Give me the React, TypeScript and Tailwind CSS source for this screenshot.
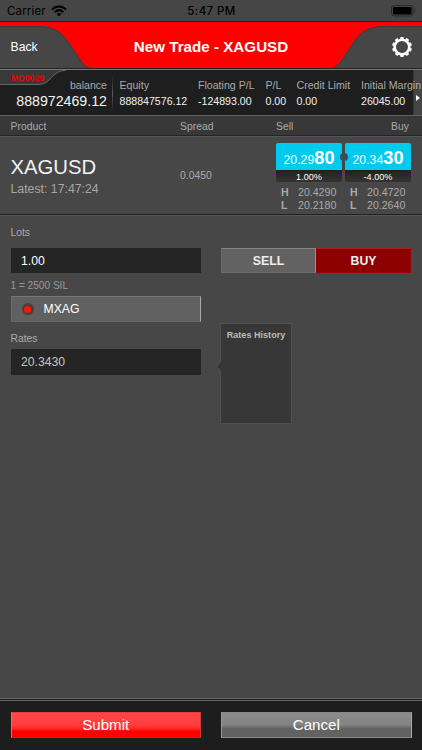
import { ReactNode } from 'react';

const accountFields = [
  { label: 'Equity', value: '888847576.12', width: 'w-[78.5px]' },
  { label: 'Floating P/L', value: '-124893.00', width: 'w-[67.5px]' },
  { label: 'P/L', value: '0.00', width: 'w-[31px]' },
  { label: 'Credit Limit', value: '0.00', width: 'w-[64.5px]' },
  { label: 'Initial Margin', value: '26045.00', width: 'w-[70px]' },
];

const quotes = [
  { side: 'Sell', base: '20.29', pips: '80', change: '1.00%', high: '20.4290', low: '20.2180' },
  { side: 'Buy', base: '20.34', pips: '30', change: '-4.00%', high: '20.4720', low: '20.2640' },
];

function StatusBar() {
  return (
    <div className="flex h-[21px] shrink-0 items-center bg-[#464646] pt-[2px] font-['Inter',sans-serif] text-black">
      <div className="flex flex-1 items-center gap-[5px] pl-[7px] text-[11.5px] tracking-[0.15px]">
        <span>Carrier</span>
        <svg width="16" height="12" viewBox="0 0 16 12" fill="none" stroke="black" strokeWidth="2" className="mb-px">
          <path d="M1 4.5C5 .4 11 .4 15 4.5" />
          <path d="M3.7 7.2c2.6-2.5 6-2.5 8.6 0" />
          <path d="M8 11.5 5.6 9c1.4-1.2 3.4-1.2 4.8 0Z" fill="black" stroke="none" />
        </svg>
      </div>
      <span className="text-[11.5px] font-medium tracking-[0.4px]">5:47 PM</span>
      <div className="flex flex-1 justify-end pb-px pr-[6px]">
        <svg width="25" height="12" viewBox="0 0 25 12">
          <rect x=".5" y=".5" width="21.5" height="10.5" rx="2.5" fill="none" stroke="#292929" />
          <rect x="2" y="2" width="18.5" height="7.5" rx="1.2" />
          <path d="M23.3 4v4c1.3-.7 1.3-3.3 0-4Z" fill="#292929" />
        </svg>
      </div>
    </div>
  );
}

function Gear() {
  const teeth = [0, 36, 72, 108, 144, 180, 216, 252, 288, 324];
  return (
    <svg width="20" height="20" viewBox="-10 -10 20 20">
      <circle r="7.3" fill="none" stroke="white" strokeWidth="2.6" />
      {teeth.map((angle) => (
        <path key={angle} d="M-1.9-8-1.5-9.9H1.5L1.9-8Z" fill="white" transform={`rotate(${angle})`} />
      ))}
    </svg>
  );
}

function NavBar() {
  return (
    <header className="relative h-[48px] shrink-0">
      <svg className="absolute inset-0" width="422" height="48" viewBox="0 0 422 48">
        <rect width="422" height="48" fill="#464646" />
        <path
          d="M0 .5H422V5H384C366 5 359 13 352 23L342 38C338 44 335 47 329 47H93C87 47 84 44 80 38L70 23C63 13 56 5 38 5H0Z"
          fill="#ff0000"
        />
        <path
          d="M0 5.5H38C56 5.5 63 13.5 69.5 23.5L79.5 38.5C83 44 86 46.5 89 46.5M422 5.5H384C366 5.5 359 13.5 352.5 23.5L342.5 38.5C339 44 336 46.5 333 46.5"
          fill="none"
          stroke="#353535"
          strokeOpacity=".65"
        />
        <path d="M0 .5H422" stroke="#2b2020" />
        <path d="M0 47.5H422" stroke="#252525" />
      </svg>
      <div className="relative flex h-[52px] items-center px-[10.5px] text-white">
        <span className="w-[60px] text-[12.2px]">Back</span>
        <h1 className="flex-1 text-center text-[15.2px] font-bold">New Trade - XAGUSD</h1>
        <span className="flex w-[60px] justify-end">
          <Gear />
        </span>
      </div>
    </header>
  );
}

function AccountBar() {
  return (
    <section className="relative flex h-[46px] shrink-0 overflow-hidden border-t border-[#777] bg-[#1e1e1e]">
      <svg className="absolute left-0 top-0" width="70" height="16" viewBox="0 0 70 16">
        <path d="M0 0H66C52 0 51 14.5 39 14.5H0Z" fill="#393939" />
        <path d="M66 .2C52 .2 51 14.5 39 14.5H0" fill="none" stroke="#666" />
      </svg>
      <span className="absolute left-[11px] top-[3px] text-[8.8px] leading-[10px] font-bold text-[#ee0000]">MD0029</span>
      <div className="absolute right-0 top-0 flex h-full w-[9px] items-center justify-center border-l border-[#8d1212] bg-[#454545] pt-[11px]">
        <svg width="4" height="6" viewBox="0 0 4 6" className="mb-[1px]">
          <path d="M0 0 4 3 0 6Z" fill="white" />
        </svg>
      </div>
      <div className="flex w-[112px] shrink-0 flex-col items-end pr-[5px] pt-[8px]">
        <span className="text-[10.6px] leading-[14px] text-[#aaa]">balance</span>
        <span className="text-[14.2px] leading-[18px] text-[#f4f4f4]">888972469.12</span>
      </div>
      <div className="mt-[7px] h-[33px] w-px shrink-0 bg-linear-to-b from-[#222] via-[#5a5a5a] to-[#222]" />
      <div className="relative flex shrink-0 pl-[6.5px] pt-[8px]">
        {accountFields.map((field) => (
          <div key={field.label} className={`${field.width} shrink-0 whitespace-nowrap`}>
            <div className="text-[10.6px] leading-[14px] text-[#aaa]">{field.label}</div>
            <div className="text-[10.6px] leading-[18px] text-[#f0f0f0]">{field.value}</div>
          </div>
        ))}
      </div>
    </section>
  );
}

function Quote({ quote }: { quote: (typeof quotes)[number] }) {
  return (
    <div className="w-[66px]">
      <div className="flex h-[27px] items-baseline justify-center rounded-t-[2px] bg-[#00caee] text-white">
        <span className="text-[12.3px] leading-[30px]">{quote.base}</span>
        <span className="text-[18.2px] leading-[30px] font-bold">{quote.pips}</span>
      </div>
      <div className="h-[12px] rounded-b-[2px] bg-linear-to-b from-[#232020] to-[#363333] text-center text-[9.1px] leading-[14px] text-white">
        {quote.change}
      </div>
      <div className="mt-[4px] grid grid-cols-[17px_1fr] pl-[5px] text-[10.6px] leading-[13px] text-[#aaa]">
        <b>H</b>
        <span>{quote.high}</span>
        <b>L</b>
        <span>{quote.low}</span>
      </div>
    </div>
  );
}

function ProductRow() {
  return (
    <section className="flex h-[79px] shrink-0 border-y border-t-[#565656] border-b-[#222]">
      <div className="w-[180px] pl-[10.5px] pt-[18px]">
        <div className="text-[20.3px] leading-[24px] text-[#f2f2f2]">XAGUSD</div>
        <div className="mt-[2px] text-[12.3px] leading-[16px] text-[#a6a6a6]">Latest: 17:47:24</div>
      </div>
      <div className="w-[96px] pt-[32px] text-[10.4px] leading-[14px] text-[#aaa]">0.0450</div>
      <div className="relative flex gap-[3px] pt-[6px]">
        {quotes.map((quote) => (
          <Quote key={quote.side} quote={quote} />
        ))}
        <span className="absolute left-[63.5px] top-[16px] size-[8px] rounded-full bg-[#424b50]" />
      </div>
    </section>
  );
}

function Label({ children }: { children: ReactNode }) {
  return <div className="text-[10.3px] leading-[12px] text-[#aaa]">{children}</div>;
}

function OrderForm() {
  return (
    <main className="flex flex-1 border-t border-[#555] px-[10.5px] pt-[11px]">
      <div className="w-[190.5px]">
        <Label>Lots</Label>
        <div className="mt-[9px] h-[25px] bg-[#252525] pl-[10.5px] text-[12.2px] leading-[26px] text-white">1.00</div>
        <div className="mt-[7px] text-[10.1px] leading-[12px] text-[#999]">1 = 2500 SIL</div>
        <div className="mt-[4px] flex h-[26px] items-center border border-t-[#777] border-r-[#aaa] border-b-[#686868] border-l-[#6d6d6d] bg-[#606060] pl-[10px] text-[12.2px] text-white">
          <span className="flex size-[12px] items-center justify-center rounded-full bg-[#4b3d39]">
            <span className="size-[7px] rounded-full bg-[#ff1400]" />
          </span>
          <span className="ml-[10px]">MXAG</span>
        </div>
        <div className="mt-[11px]">
          <Label>Rates</Label>
        </div>
        <div className="mt-[4px] h-[26px] bg-[#252525] pl-[10.5px] text-[12.2px] leading-[27px] text-[#c4c4c4]">20.3430</div>
      </div>
      <div className="ml-[20px] w-[190px] pt-[21px]">
        <div className="flex h-[25px] text-center text-[12.3px] font-bold text-[#eee]">
          <div className="flex-1 border border-t-[#858585] border-r-[#c08080] border-b-[#6d6d6d] border-l-[#6a6a6a] bg-[#626262] leading-[24px]">
            SELL
          </div>
          <div className="flex-1 border border-t-[#a52020] border-r-[#a00000] border-b-[#a00000] border-l-[#8c0000] bg-[#8c0000] leading-[24px]">
            BUY
          </div>
        </div>
        <div className="relative mt-[50px] -ml-px h-[101px] w-[72px] border border-[#505050] bg-[#373737] pt-[5px] text-center text-[9.1px] leading-[12px] font-bold text-[#bbb]">
          Rates History
          <svg className="absolute -left-[5px] top-[37px]" width="5" height="11" viewBox="0 0 5 11">
            <path d="M5 0 .7 5.5 5 11Z" fill="#373737" />
            <path d="M5 0 .7 5.5 5 11" fill="none" stroke="#505050" />
          </svg>
        </div>
      </div>
    </main>
  );
}

export default function App() {
  return (
    <div className="flex h-[750px] w-[422px] flex-col overflow-hidden bg-[#474747] font-['Liberation_Sans',Arial,sans-serif]">
      <StatusBar />
      <NavBar />
      <AccountBar />
      <div className="flex h-[21px] shrink-0 border-y border-t-[#626262] border-b-[#242424] bg-[#383838] pl-[10.5px] text-[10.4px] leading-[22px] text-[#aaa]">
        <span className="w-[169.5px]">Product</span>
        <span className="w-[96px]">Spread</span>
        <span>Sell</span>
        <span className="ml-auto pr-[13px]">Buy</span>
      </div>
      <ProductRow />
      <OrderForm />
      <footer className="flex h-[52px] shrink-0 gap-[20px] border-t-[3px] border-double border-[#666] bg-[#1d1d1d] px-[10.5px] pt-[11px] text-center text-[15.1px] leading-[24px] text-white">
        <div className="h-[26px] flex-1 border border-t-[#e04040] border-r-[#c93a30] border-b-[#d51c18] border-l-[#ff6060] bg-linear-to-b from-[#ff4545] from-0% via-[#ff3e3e] via-50% to-[#ff0000] to-75%">
          Submit
        </div>
        <div className="h-[26px] flex-1 border border-t-[#888] border-r-[#aaa] border-b-[#888] border-l-[#999] bg-linear-to-b from-[#8c8c8c] from-0% via-[#838383] via-50% to-[#626262] to-65%">
          Cancel
        </div>
      </footer>
    </div>
  );
}
